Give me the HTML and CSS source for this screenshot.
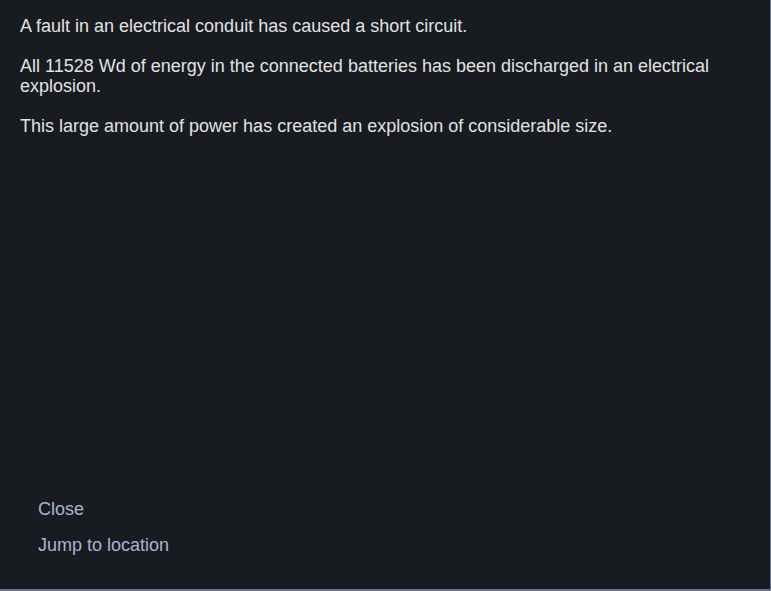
FILE: index.html
```html
<!DOCTYPE html>
<html>
<head>
<meta charset="utf-8">
<link rel="stylesheet" href="styles.css">
</head>
<body>
<div class="panel">
  <div class="message">
    <p>A fault in an electrical conduit has caused a short circuit.</p>
    <p>All 11528 Wd of energy in the connected batteries has been discharged in an electrical explosion.</p>
    <p>This large amount of power has created an explosion of considerable size.</p>
  </div>
  <div class="actions">
    <a class="action">Close</a>
    <a class="action">Jump to location</a>
  </div>
</div>
</body>
</html>
```
FILE: styles.css
```css
html, body {
  margin: 0;
  padding: 0;
  background: #181b20;
}
.panel {
  box-sizing: border-box;
  width: 771px;
  height: 591px;
  display: flex;
  flex-direction: column;
  background: #181b20;
  border-right: 1px solid #6b7585;
  border-bottom: 2px solid #6b7585;
  font-family: "Liberation Sans", Arial, sans-serif;
  font-size: 18px;
  line-height: 20px;
}
.message {
  padding: 16px 20px 0 20px;
  color: #e2e2e2;
}
.message p {
  margin: 0 0 20px 0;
}
.actions {
  margin-top: auto;
  padding: 0 0 34px 38px;
  display: flex;
  flex-direction: column;
  gap: 16px;
}
.action {
  color: #aab3d4;
  cursor: pointer;
}
```
